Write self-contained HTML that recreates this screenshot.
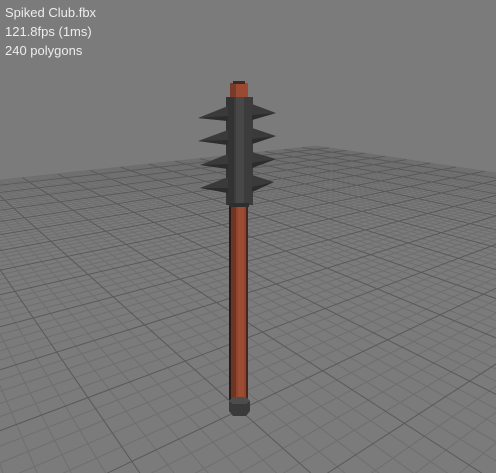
<!DOCTYPE html>
<html><head><meta charset="utf-8"><style>
html,body{margin:0;padding:0;background:#7b7b7b;width:496px;height:473px;overflow:hidden}
#t{position:absolute;left:5px;top:3px;color:#ececec;font:13px/19px "Liberation Sans",sans-serif}
svg{position:absolute;left:0;top:0;overflow:hidden}
</style></head><body>
<svg id="s" width="496" height="473" viewBox="0 0 496 473">
<g id="grid"></g>
<g id="club">
  <rect x="230" y="200" width="18" height="202" fill="#8e4430"/>
  <rect x="230" y="200" width="6" height="202" fill="#6e3424"/>
  <rect x="238" y="200" width="6" height="202" fill="#9c4c33"/>
  <rect x="229" y="200" width="2" height="200" fill="#2a1a14"/>
  <rect x="246" y="200" width="2" height="200" fill="#4a2418"/>
  <path d="M229 401 L233 397 L246 397 L250 401 L250 411 L246 416 L233 416 L229 411Z" fill="#3a3a3a"/>
  <path d="M229 401 L233 397 L246 397 L250 401 L246 404 L233 404Z" fill="#4d4d4d"/>
  <rect x="230" y="83" width="18" height="16" fill="#9a4a32"/>
  <rect x="230" y="83" width="6" height="16" fill="#7a3a28"/>
  <rect x="233" y="81" width="12" height="3" fill="#3a2a22"/>
  <rect x="226" y="97" width="27" height="108" fill="#3c3c3c"/>
  <rect x="226" y="97" width="8" height="108" fill="#333"/>
  <rect x="236" y="97" width="8" height="108" fill="#474747"/>
  <rect x="229" y="203" width="20" height="4" fill="#2e2e2e"/>
  <g fill="#3a3a3a">
   <path d="M228 106 L198 118 L228 121Z"/><path d="M252 104 L276 113 L252 120Z"/>
   <path d="M228 130 L198 141 L228 145Z"/><path d="M252 128 L276 136 L252 144Z"/>
   <path d="M228 154 L200 165 L228 169Z"/><path d="M252 152 L276 159 L252 168Z"/>
   <path d="M228 177 L200 188 L228 193Z"/><path d="M252 175 L274 182 L252 192Z"/>
  </g>
  <g fill="#2c2c2c">
   <path d="M228 116 L198 118 L228 121Z"/><path d="M252 115 L276 113 L252 120Z"/>
   <path d="M228 140 L198 141 L228 145Z"/><path d="M252 139 L276 136 L252 144Z"/>
   <path d="M228 164 L200 165 L228 169Z"/><path d="M252 163 L276 159 L252 168Z"/>
   <path d="M228 188 L200 188 L228 193Z"/><path d="M252 187 L274 182 L252 192Z"/>
  </g>
</g>
</svg>
<div id="t">Spiked Club.fbx<br>121.8fps (1ms)<br>240 polygons</div>
<script>
(function(){
 var VU=[936,79,1],VV=[-131,79,1],O=[240,410,1],A=1.722,B=2.218,N=64;
 function P(u,v){var x=A*u*VU[0]+B*v*VV[0]+O[0],y=A*u*VU[1]+B*v*VV[1]+O[1],w=A*u+B*v+1;return [x/w,y/w,w];}
 var minor="",major="";
 function seg(fixedU,c){
  var lo=-1,hi=1;
  var k=fixedU?B:A, base=1+(fixedU?A:B)*c;
  var tmin=(0.03-base)/k; if(tmin>lo) lo=tmin;
  if(lo>=hi) return "";
  var p1=fixedU?P(c,lo):P(lo,c), p2=fixedU?P(c,hi):P(hi,c);
  return "M"+p1[0].toFixed(1)+" "+p1[1].toFixed(1)+"L"+p2[0].toFixed(1)+" "+p2[1].toFixed(1);
 }
 for(var i=-N;i<=N;i++){
  var c=i/N, s=seg(true,c)+seg(false,c);
  if(i%5==0) major+=s; else minor+=s;
 }
 document.getElementById("grid").innerHTML='<path d="'+minor+'" stroke="#6e6e6e" stroke-width="1" fill="none"/><path d="'+major+'" stroke="#595959" stroke-width="1" fill="none"/>';
})();
</script>
</body></html>
